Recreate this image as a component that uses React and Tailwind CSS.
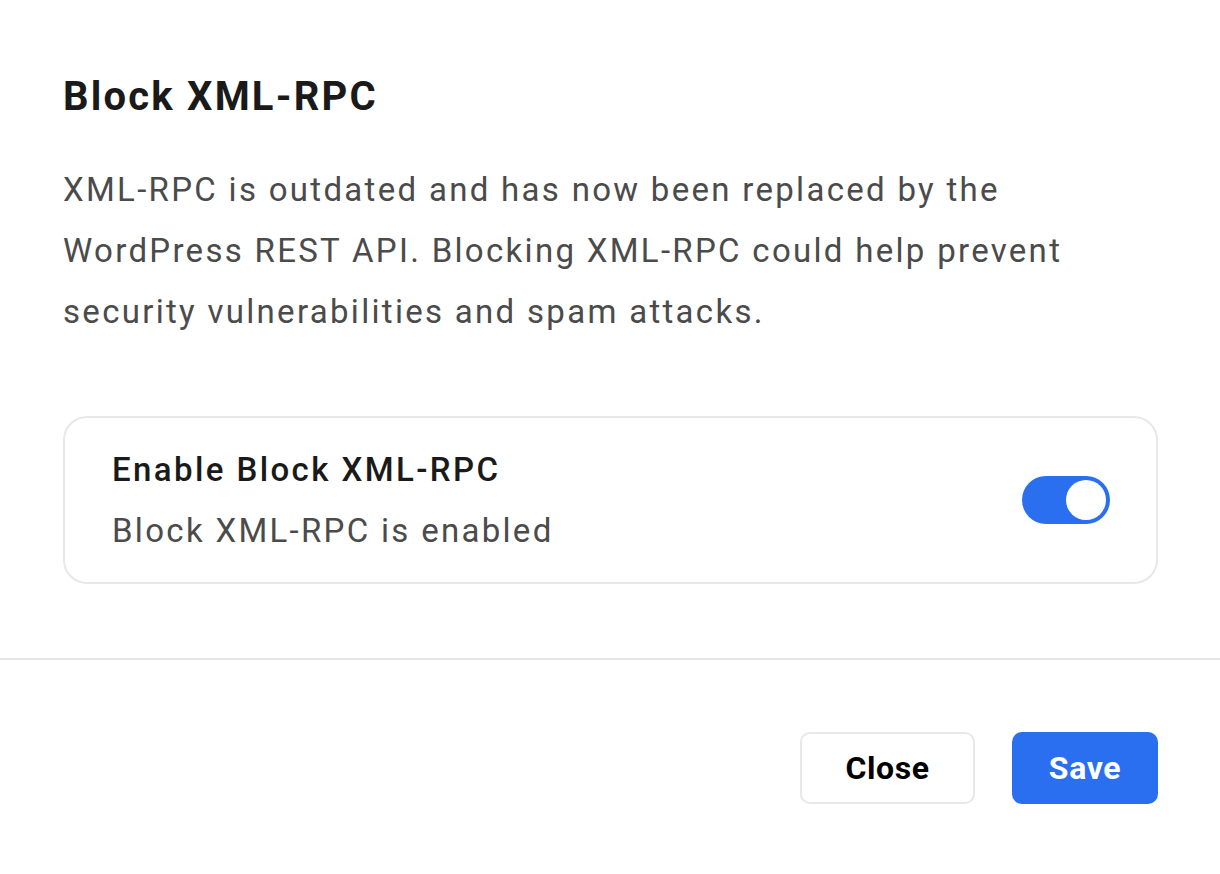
import { useState } from 'react'

export default function App() {
  const [enabled, setEnabled] = useState(true)

  return (
    <div className="min-h-screen w-full bg-white font-['Roboto',sans-serif] flex flex-col">
      <div className="pt-[73px] px-[63px]">
        <h2 className="text-[40px] leading-[48px] font-bold tracking-[2.2px] text-[#1a1a1a]">Block XML-RPC</h2>
        <p className="mt-[38px] w-[1095px] text-[33px] leading-[61px] tracking-[2.3px] text-[#4b4b4b]">
          XML-RPC is outdated and has now been replaced by the WordPress REST API. Blocking XML-RPC could help prevent security vulnerabilities and spam attacks.
        </p>

        <div className="mt-[74px] w-[1095px] flex items-center justify-between border-2 border-[#e8e8e8] rounded-[24px] pl-[47px] pr-[46px] py-[21px]">
          <div>
            <div className="text-[33px] leading-[61px] font-medium tracking-[2.4px] text-[#1a1a1a]">Enable Block XML-RPC</div>
            <div className="text-[33px] leading-[61px] tracking-[2.3px] text-[#4b4b4b]">Block XML-RPC is enabled</div>
          </div>
          <button
            onClick={() => setEnabled(!enabled)}
            className={`w-[88px] h-[48px] rounded-full flex items-center px-[4px] ${enabled ? 'bg-[#2a6ff0] justify-end' : 'bg-gray-300 justify-start'}`}
          >
            <span className="w-[40px] h-[40px] rounded-full bg-white block" />
          </button>
        </div>
      </div>

      <div className="mt-[74px] h-[2px] bg-[#e6e6e6] w-full" />

      <div className="flex justify-end gap-[37px] pt-[72px] pr-[62px]">
        <button className="w-[175px] h-[72px] rounded-[10px] border-2 border-[#e8e8e8] bg-white text-[32px] font-bold tracking-[0.6px] text-black">Close</button>
        <button className="w-[146px] h-[72px] rounded-[10px] bg-[#2a6ff0] text-[32px] font-bold tracking-[0.6px] text-white">Save</button>
      </div>
    </div>
  )
}
